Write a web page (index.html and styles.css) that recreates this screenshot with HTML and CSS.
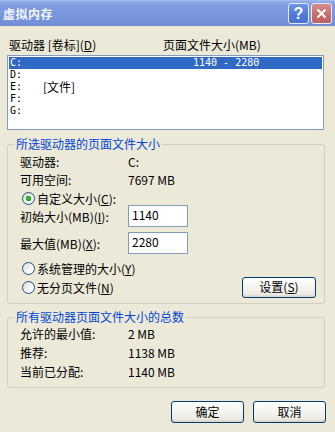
FILE: index.html
```html
<!DOCTYPE html>
<html lang="zh-CN">
<head>
    <meta charset="UTF-8">
    <title>虚拟内存</title>
    <link rel="stylesheet" href="styles.css">
</head>
<body>
    <div class="titlebar">
        <span class="title">虚拟内存</span>
        <div class="caption-btns">
            <span class="cap help">?</span>
            <span class="cap close">
                <svg width="11" height="11" viewBox="0 0 11 11"><path d="M1.5 1.5 L9.5 9.5 M9.5 1.5 L1.5 9.5" stroke="#fff" stroke-width="2"/></svg>
            </span>
        </div>
    </div>

    <div class="content">
        <div class="list-head">
            <span class="head-drive">驱动器 [卷标](<u>D</u>)</span>
            <span>页面文件大小(MB)</span>
        </div>
        <div class="listbox">
            <div class="row selected"><span>C:</span><span></span><span>1140 - 2280</span></div>
            <div class="row"><span>D:</span><span></span><span></span></div>
            <div class="row"><span>E:</span><span class="cjk">[文件]</span><span></span></div>
            <div class="row"><span>F:</span><span></span><span></span></div>
            <div class="row"><span>G:</span><span></span><span></span></div>
        </div>

        <div class="group selected-drive">
            <span class="legend">所选驱动器的页面文件大小</span>
            <div class="info">
                <span>驱动器:</span><span>C:</span>
                <span>可用空间:</span><span>7697 MB</span>
            </div>
            <div class="radio-row first">
                <span class="radio checked"></span>
                <span>自定义大小(<u>C</u>):</span>
            </div>
            <div class="field">
                <label for="initial">初始大小(MB)(<u>I</u>):</label>
                <input type="text" id="initial" class="textbox" value="1140">
            </div>
            <div class="field second">
                <label for="maximum">最大值(MB)(<u>X</u>):</label>
                <input type="text" id="maximum" class="textbox" value="2280">
            </div>
            <div class="radio-row mid">
                <span class="radio"></span>
                <span>系统管理的大小(<u>Y</u>)</span>
            </div>
            <div class="radio-row last">
                <div class="radio-label">
                    <span class="radio"></span>
                    <span>无分页文件(<u>N</u>)</span>
                </div>
                <button class="btn set-btn">设置(<u>S</u>)</button>
            </div>
        </div>

        <div class="group totals">
            <span class="legend">所有驱动器页面文件大小的总数</span>
            <div class="info">
                <span>允许的最小值:</span><span>2 MB</span>
                <span>推荐:</span><span>1138 MB</span>
                <span>当前已分配:</span><span>1140 MB</span>
            </div>
        </div>

        <div class="actions">
            <button class="btn">确定</button>
            <button class="btn">取消</button>
        </div>
    </div>
</body>
</html>
```

FILE: styles.css
```css
* {
    box-sizing: border-box;
}
html, body {
    margin: 0;
    padding: 0;
}
body {
    width: 335px;
    height: 432px;
    overflow: hidden;
    background-color: #ECE9D8;
    font-family: "Noto Sans CJK SC", "Noto Sans", sans-serif;
    font-size: 12px;
    color: #000;
}
u {
    text-decoration: underline;
    text-underline-offset: 1px;
}

/* title bar (inactive XP look) */
.titlebar {
    height: 26px;
    display: flex;
    align-items: center;
    justify-content: space-between;
    padding: 0 3px 0 3px;
    background: linear-gradient(to bottom, #A9C0F0 0, #8CA8E8 2px, #7E9BE0 7px, #7893DC 18px, #7390D9 24px, #6F89CF 26px);
}
.title {
    color: #F2F5FC;
    font-weight: bold;
    font-size: 12px;
    letter-spacing: 0.5px;
}
.caption-btns {
    display: flex;
    gap: 2px;
    margin-top: 1px;
}
.cap {
    width: 21px;
    height: 21px;
    border: 1px solid #E6ECFA;
    border-radius: 3px;
    display: flex;
    align-items: center;
    justify-content: center;
    color: #fff;
    font-family: "Liberation Sans", sans-serif;
    font-weight: bold;
    font-size: 16px;
}
.help {
    background: linear-gradient(to bottom, #6E96E6, #4D78D8 60%, #4B73D2);
}
.close {
    background: linear-gradient(to bottom, #D58E8D, #C56B6A 60%, #BF6263);
}

.content {
    padding: 13px 10px 0 7px;
}

/* drive list */
.list-head {
    display: flex;
    height: 12px;
    line-height: 12px;
    padding-left: 2px;
    margin-bottom: 4px;
}
.head-drive {
    width: 154px;
}
.listbox {
    width: 317px;
    height: 75px;
    border: 1px solid #7F9DB9;
    background-color: #fff;
    padding: 1px 1px;
}
.row {
    display: grid;
    grid-template-columns: 33px 150px auto;
    height: 12px;
    line-height: 12px;
    padding-left: 1px;
    font-family: "DejaVu Sans Mono", monospace;
    font-size: 10px;
}
.row .cjk {
    font-family: "Noto Sans CJK SC", sans-serif;
    font-size: 12px;
}
.row.selected {
    background-color: #316AC5;
    color: #fff;
}

/* group boxes */
.group {
    position: relative;
    border: 1px solid #D0D0BF;
    border-radius: 3px;
}
.legend {
    position: absolute;
    top: -7px;
    left: 6px;
    padding: 0 2px;
    line-height: 12px;
    background-color: #ECE9D8;
    color: #0046D5;
}
.selected-drive {
    margin-top: 14px;
    padding: 8px 8px 5px 12px;
}
.totals {
    margin-top: 13px;
    padding: 6px 8px 6px 12px;
}
.info {
    display: grid;
    grid-template-columns: 108px auto;
    line-height: 17.5px;
}
.totals .info {
    line-height: 19px;
}

.radio-row {
    display: flex;
    align-items: center;
    height: 14px;
    padding-left: 2px;
}
.radio-row.first {
    margin-top: 3px;
}
.radio-row.mid {
    margin-top: 7px;
}
.radio-row.last {
    height: 22px;
    margin-top: 1px;
    justify-content: space-between;
}
.radio-label {
    display: flex;
    align-items: center;
}
.radio {
    width: 13px;
    height: 13px;
    margin-right: 2px;
    border: 1px solid #1C5180;
    border-radius: 50%;
    background: linear-gradient(135deg, #DCDCD3, #fff 80%);
}
.radio.checked {
    background: radial-gradient(circle, #4DC24D 0, #22A022 2.6px, transparent 3px), linear-gradient(135deg, #DCDCD3, #fff 80%);
}

.field {
    display: grid;
    grid-template-columns: 108px 60px;
    align-items: center;
}
.field.second {
    margin-top: 5px;
}
.textbox {
    width: 60px;
    height: 22px;
    margin: 0;
    border: 1px solid #7F9DB9;
    background-color: #fff;
    padding: 0 3px 3px 3px;
    font-family: "Noto Sans CJK SC", "Noto Sans", sans-serif;
    font-size: 12px;
    color: #000;
    outline: none;
}

/* push buttons */
.btn {
    width: 73px;
    height: 22px;
    padding: 0;
    border: 1px solid #003C74;
    border-radius: 3px;
    background: linear-gradient(to bottom, #FFFFFF 0, #F6F6F2 40%, #EBEAE4 85%, #D6D0C5 100%);
    font-family: "Noto Sans CJK SC", "Noto Sans", sans-serif;
    font-size: 12px;
    line-height: 18px;
    color: #000;
}
.set-btn {
    width: 74px;
    height: 21px;
}
.actions {
    display: flex;
    justify-content: flex-end;
    gap: 9px;
    margin-top: 13px;
    margin-right: -1px;
}
```
